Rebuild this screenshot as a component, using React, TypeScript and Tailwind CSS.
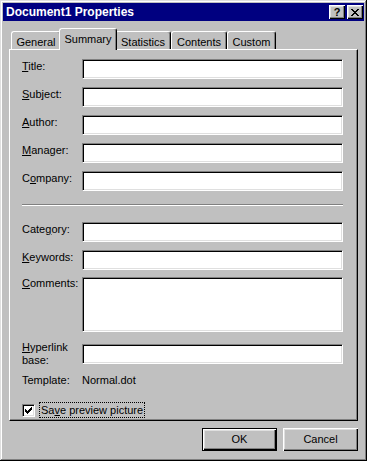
import type { ReactNode } from 'react'

const font = { fontFamily: '"Liberation Sans", Arial, sans-serif' }

function Field({ h = 'h-[20px]' }: { h?: string }) {
  return (
    <div
      className={`${h} w-[261px] bg-white border border-t-[#808080] border-l-[#808080] border-b-white border-r-white shadow-[inset_1px_1px_#000,inset_-1px_-1px_#dfdfdf]`}
    />
  )
}

function Row({ label, children, className = '', labelClass = 'pt-[1px]' }: { label: ReactNode; children: ReactNode; className?: string; labelClass?: string }) {
  return (
    <div className={`flex items-start ${className}`}>
      <div className={`w-[60px] shrink-0 ${labelClass}`}>{label}</div>
      {children}
    </div>
  )
}

function Tab({ label, width, selected }: { label: string; width: string; selected?: boolean }) {
  return (
    <div
      className={`${width} ${
        selected ? 'h-[22px] -mx-[2px] -mb-px relative z-10 pt-[4px]' : 'h-[18px] pt-[4px]'
      } bg-[#c0c0c0] rounded-t-[3px] border-t border-l border-t-white border-l-white border-r border-r-black shadow-[inset_-1px_0_#808080] text-center`}
    >
      {label}
    </div>
  )
}

function Button({ children, isDefault }: { children: ReactNode; isDefault?: boolean }) {
  return (
    <div
      className={`w-[75px] h-[23px] flex items-center justify-center bg-[#c0c0c0] ${
        isDefault
          ? 'border border-black shadow-[inset_1px_1px_#fff,inset_-1px_-1px_#000,inset_-2px_-2px_#808080,inset_2px_2px_#dfdfdf]'
          : 'shadow-[inset_1px_1px_#fff,inset_-1px_-1px_#000,inset_-2px_-2px_#808080,inset_2px_2px_#dfdfdf]'
      }`}
    >
      {children}
    </div>
  )
}

function TitleButton({ children }: { children: ReactNode }) {
  return (
    <div className="w-[16px] h-[14px] flex items-center justify-center bg-[#c0c0c0] text-black shadow-[inset_1px_1px_#fff,inset_-1px_-1px_#000,inset_-2px_-2px_#808080,inset_2px_2px_#dfdfdf]">
      {children}
    </div>
  )
}

export default function App() {
  return (
    <div
      style={font}
      className="w-[367px] h-[461px] bg-[#c0c0c0] p-[3px] text-[11px] leading-[13px] text-black shadow-[inset_-1px_-1px_#000,inset_1px_1px_#dfdfdf,inset_-2px_-2px_#808080,inset_2px_2px_#fff]"
    >
      <div className="h-[18px] bg-[#000080] flex items-center justify-between pl-[3px] pr-[1px]">
        <span className="text-white font-bold text-[12px]">Document1 Properties</span>
        <div className="flex gap-[2px]">
          <TitleButton>
            <span className="font-bold text-[11px] leading-none mt-[1px]">?</span>
          </TitleButton>
          <TitleButton>
            <svg width="8" height="7" viewBox="0 0 8 7" shapeRendering="crispEdges">
              <path d="M0 0h2v1h-2zM6 0h2v1h-2zM1 1h2v1h-2zM5 1h2v1h-2zM2 2h4v1h-4zM3 3h2v1h-2zM2 4h4v1h-4zM1 5h2v1h-2zM5 5h2v1h-2zM0 6h2v1h-2zM6 6h2v1h-2z" fill="#000" />
            </svg>
          </TitleButton>
        </div>
      </div>

      <div className="px-[6px] pt-[7px]">
        <div className="flex items-end h-[21px] pl-[2px]">
          <Tab label="General" width="w-[50px]" />
          <Tab label="Summary" width="w-[58px]" selected />
          <Tab label="Statistics" width="w-[56px]" />
          <Tab label="Contents" width="w-[56px]" />
          <Tab label="Custom" width="w-[49px]" />
        </div>

        <div className="h-[372px] border border-t-white border-l-white border-r-black border-b-black shadow-[inset_-1px_-1px_#808080] pl-[12px] pt-[9px]">
          <Row label={<><u>T</u>itle:</>}>
            <Field />
          </Row>
          <Row className="mt-[8px]" label={<><u>S</u>ubject:</>}>
            <Field />
          </Row>
          <Row className="mt-[8px]" label={<><u>A</u>uthor:</>}>
            <Field />
          </Row>
          <Row className="mt-[8px]" label={<><u>M</u>anager:</>}>
            <Field />
          </Row>
          <Row className="mt-[8px]" label={<>C<u>o</u>mpany:</>}>
            <Field />
          </Row>

          <div className="mt-[13px] w-[321px] h-[2px] border-t border-t-[#808080] border-b border-b-white" />

          <Row className="mt-[16px]" label={<>Cate<u>g</u>ory:</>}>
            <Field />
          </Row>
          <Row className="mt-[8px]" label={<><u>K</u>eywords:</>}>
            <Field />
          </Row>
          <Row className="mt-[7px]" labelClass="pt-0" label={<><u>C</u>omments:</>}>
            <Field h="h-[55px]" />
          </Row>
          <Row className="mt-[12px]" labelClass="-mt-[3px]" label={<><u>H</u>yperlink<br />base:</>}>
            <Field />
          </Row>
          <Row className="mt-[7px]" labelClass="" label="Template:">
            <span>Normal.dot</span>
          </Row>

          <div className="mt-[15px] flex items-center">
            <div className="w-[13px] h-[13px] bg-white border border-t-[#808080] border-l-[#808080] border-b-white border-r-white shadow-[inset_1px_1px_#000,inset_-1px_-1px_#dfdfdf] flex items-center justify-center">
              <svg width="7" height="7" viewBox="0 0 7 7" shapeRendering="crispEdges">
                <path d="M6 0h1v3h-1zM5 1h1v3h-1zM4 2h1v3h-1zM3 3h1v3h-1zM2 4h1v3h-1zM1 3h1v3h-1zM0 2h1v3h-1z" fill="#000" />
              </svg>
            </div>
            <div className="ml-[4px] h-[16px] px-[1px] border border-dotted border-black flex items-center">
              Sa<u>v</u>e preview picture
            </div>
          </div>
        </div>

        <div className="mt-[7px] flex justify-end gap-[6px]">
          <Button isDefault>OK</Button>
          <Button>Cancel</Button>
        </div>
      </div>
    </div>
  )
}
